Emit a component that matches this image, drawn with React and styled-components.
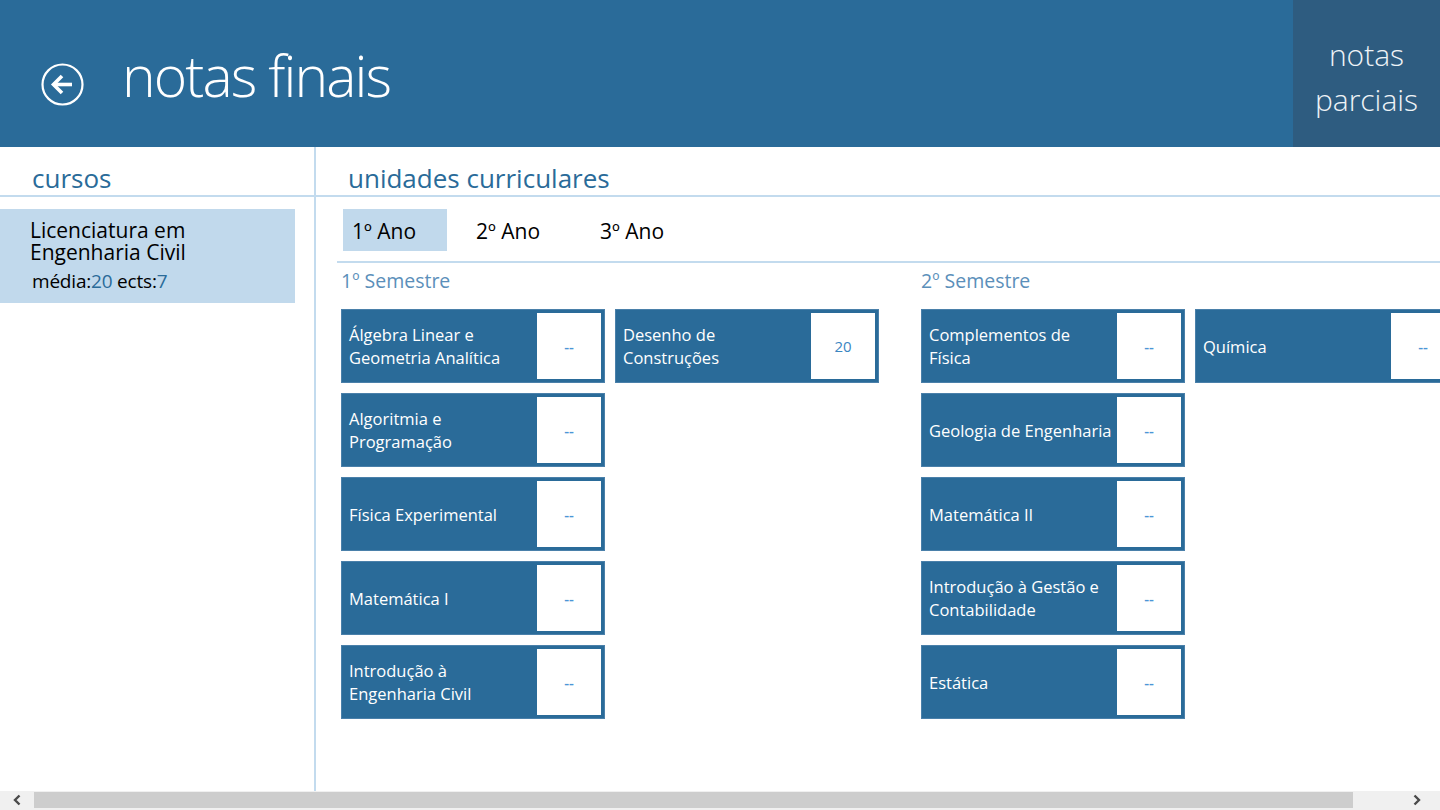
import React from "react";
import styled, { createGlobalStyle } from "styled-components";

const colors = {
  blue: "#2a6b99",
  blueDark: "#2e5c80",
  line: "#c3dbee",
  selected: "#c1d9ec",
  semester: "#5b8fba",
  grade: "#3b86c2",
};

const GlobalStyle = createGlobalStyle`
  html, body {
    margin: 0;
    padding: 0;
    background: #ffffff;
  }
  body {
    font-family: "Open Sans", "Noto Sans", sans-serif;
    color: #000;
  }
  * { box-sizing: border-box; }
`;

const Page = styled.div`
  width: 1440px;
  height: 810px;
  display: flex;
  flex-direction: column;
  overflow: hidden;
  background: #fff;
`;

const Header = styled.header`
  height: 147px;
  flex-shrink: 0;
  display: flex;
  align-items: stretch;
  background: ${colors.blue};
  color: #fff;
`;

const BackButton = styled.button`
  margin: 63px 0 0 41px;
  width: 43px;
  height: 43px;
  padding: 0;
  border: none;
  background: none;
  cursor: pointer;
  display: flex;
`;

const Title = styled.h1`
  margin: 0 0 0 38px;
  padding-top: 47px;
  font-size: 57px;
  font-weight: 300;
  line-height: 1;
  letter-spacing: -1.9px;
  flex: 1;
`;

const ParciaisTile = styled.div`
  width: 147px;
  background: ${colors.blueDark};
  display: flex;
  flex-direction: column;
  align-items: center;
  justify-content: center;
  padding-top: 6px;
  font-size: 30px;
  font-weight: 300;
  line-height: 45px;
  color: #eef3f7;
`;

const Body = styled.div`
  flex: 1;
  display: flex;
  min-height: 0;
`;

const CoursesPanel = styled.aside`
  width: 316px;
  flex-shrink: 0;
  border-right: 2px solid ${colors.line};
`;

const UnitsPanel = styled.main`
  flex: 1;
  overflow: hidden;
`;

const PanelHeader = styled.h2`
  margin: 0;
  height: 50px;
  border-bottom: 2px solid ${colors.line};
  padding: 0 0 4px ${(p) => p.$indent}px;
  display: flex;
  align-items: flex-end;
  font-size: 26px;
  font-weight: 400;
  line-height: 1;
  color: ${colors.blue};
`;

const CourseItem = styled.div`
  margin-top: 12px;
  width: 295px;
  height: 94px;
  background: ${colors.selected};
  padding: 10px 0 0 30px;
`;

const CourseName = styled.div`
  font-size: 21px;
  line-height: 22px;
`;

const CourseMeta = styled.div`
  margin: 6px 0 0 2px;
  font-size: 19px;
  line-height: 24px;
  letter-spacing: -0.2px;
`;

const Num = styled.span`
  color: ${colors.blue};
`;

const Tabs = styled.div`
  display: flex;
  gap: 20px;
  margin: 12px 0 0 27px;
`;

const Tab = styled.div`
  width: 104px;
  height: 42px;
  padding: 7px 0 0 9px;
  font-size: 21px;
  line-height: 30px;
  background: ${(p) => (p.$active ? colors.selected : "transparent")};
`;

const TabLine = styled.div`
  margin: 10px 0 0 21px;
  height: 2px;
  background: ${colors.line};
`;

const Semesters = styled.div`
  display: flex;
  gap: 42px;
  margin-left: 25px;
`;

const Semester = styled.section`
  display: flex;
  flex-direction: column;
  flex-shrink: 0;
`;

const SemesterTitle = styled.h3`
  margin: 4px 0 0 0;
  height: 42px;
  font-size: 19.5px;
  font-weight: 400;
  line-height: 28px;
  color: ${colors.semester};
`;

const CardGrid = styled.div`
  display: grid;
  grid-auto-flow: column;
  grid-template-rows: repeat(5, 74px);
  grid-auto-columns: 264px;
  column-gap: 10px;
  row-gap: 10px;
`;

const Card = styled.div`
  display: flex;
  align-items: stretch;
  background: ${colors.blue};
  box-shadow: inset 0 0 0 1px #4a80aa;
  padding: 4px;
`;

const CardName = styled.div`
  flex: 1;
  display: flex;
  align-items: center;
  padding: 0 4px 0 4px;
  color: #fff;
  font-size: 16.5px;
  line-height: 23px;
`;

const Grade = styled.div`
  width: 64px;
  background: #fff;
  display: flex;
  align-items: center;
  justify-content: center;
  font-size: 15px;
  font-weight: ${(p) => (p.$empty ? 600 : 400)};
  color: ${(p) => (p.$empty ? "#4c95d6" : colors.grade)};
`;

const Scrollbar = styled.div`
  height: 19px;
  flex-shrink: 0;
  display: flex;
  background: #f0f0f0;
  padding: 1px 0 2px;
`;

const ScrollArrow = styled.div`
  width: ${(p) => p.$w}px;
  display: flex;
  align-items: center;
  justify-content: ${(p) => (p.$right ? "flex-end" : "center")};
  padding-right: ${(p) => (p.$right ? 19 : 0)}px;
`;

const Thumb = styled.div`
  flex: 1;
  background: #cdcdcd;
`;

const semesters = [
  {
    title: "1º Semestre",
    units: [
      ["Álgebra Linear e Geometria Analítica", "--"],
      ["Algoritmia e Programação", "--"],
      ["Física Experimental", "--"],
      ["Matemática I", "--"],
      ["Introdução à Engenharia Civil", "--"],
      ["Desenho de Construções", "20"],
    ],
  },
  {
    title: "2º Semestre",
    units: [
      ["Complementos de Física", "--"],
      ["Geologia de Engenharia", "--"],
      ["Matemática II", "--"],
      ["Introdução à Gestão e Contabilidade", "--"],
      ["Estática", "--"],
      ["Química", "--"],
    ],
  },
];

const BackIcon = () => (
  <svg width="43" height="43" viewBox="0 0 43 43">
    <circle cx="21.5" cy="21.5" r="20" fill="none" stroke="#fff" strokeWidth="2.2" />
    <path d="M12.5 21.5 H31" stroke="#fff" strokeWidth="3.6" />
    <path d="M21 13 L12.5 21.5 L21 30" fill="none" stroke="#fff" strokeWidth="3.6" />
  </svg>
);

const Chevron = ({ right }) => (
  <svg width="8" height="12" viewBox="0 0 8 12">
    <path
      d={right ? "M1.5 1.5 L6 6 L1.5 10.5" : "M6.5 1.5 L2 6 L6.5 10.5"}
      fill="none"
      stroke="#4a4a4a"
      strokeWidth="2.4"
    />
  </svg>
);

export default function App() {
  return (
    <Page>
      <GlobalStyle />
      <Header>
        <BackButton aria-label="voltar">
          <BackIcon />
        </BackButton>
        <Title>notas finais</Title>
        <ParciaisTile>
          <span>notas</span>
          <span>parciais</span>
        </ParciaisTile>
      </Header>
      <Body>
        <CoursesPanel>
          <PanelHeader $indent={32}>cursos</PanelHeader>
          <CourseItem>
            <CourseName>
              Licenciatura em
              <br />
              Engenharia Civil
            </CourseName>
            <CourseMeta>
              média:<Num>20</Num> ects:<Num>7</Num>
            </CourseMeta>
          </CourseItem>
        </CoursesPanel>
        <UnitsPanel>
          <PanelHeader $indent={32}>unidades curriculares</PanelHeader>
          <Tabs>
            <Tab $active>1º Ano</Tab>
            <Tab>2º Ano</Tab>
            <Tab>3º Ano</Tab>
          </Tabs>
          <TabLine />
          <Semesters>
            {semesters.map((s) => (
              <Semester key={s.title}>
                <SemesterTitle>{s.title}</SemesterTitle>
                <CardGrid>
                  {s.units.map(([name, grade]) => (
                    <Card key={name}>
                      <CardName>{name}</CardName>
                      <Grade $empty={grade === "--"}>{grade}</Grade>
                    </Card>
                  ))}
                </CardGrid>
              </Semester>
            ))}
          </Semesters>
        </UnitsPanel>
      </Body>
      <Scrollbar>
        <ScrollArrow $w={34}>
          <Chevron />
        </ScrollArrow>
        <Thumb />
        <ScrollArrow $w={87} $right>
          <Chevron right />
        </ScrollArrow>
      </Scrollbar>
    </Page>
  );
}
